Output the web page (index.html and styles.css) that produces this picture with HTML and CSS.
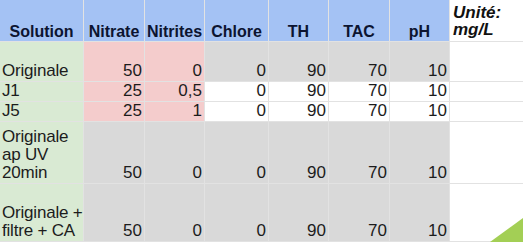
FILE: index.html
```html
<!DOCTYPE html>
<html lang="fr">
<head>
<meta charset="utf-8">
<title>Solutions</title>
<link rel="stylesheet" href="styles.css">
</head>
<body>
<div class="sheet">
  <div class="c hd">Solution</div>
  <div class="c hd">Nitrate</div>
  <div class="c hd">Nitrites</div>
  <div class="c hd">Chlore</div>
  <div class="c hd">TH</div>
  <div class="c hd">TAC</div>
  <div class="c hd">pH</div>
  <div class="c unit"><span>Unité:<br>mg/L</span></div>

  <div class="c g">Originale</div>
  <div class="c num p">50</div>
  <div class="c num p">0</div>
  <div class="c num gr">0</div>
  <div class="c num gr">90</div>
  <div class="c num gr">70</div>
  <div class="c num gr">10</div>
  <div class="c"></div>

  <div class="c g">J1</div>
  <div class="c num p">25</div>
  <div class="c num p">0,5</div>
  <div class="c num">0</div>
  <div class="c num">90</div>
  <div class="c num">70</div>
  <div class="c num">10</div>
  <div class="c"></div>

  <div class="c g">J5</div>
  <div class="c num p">25</div>
  <div class="c num p">1</div>
  <div class="c num">0</div>
  <div class="c num">90</div>
  <div class="c num">70</div>
  <div class="c num">10</div>
  <div class="c"></div>

  <div class="c g"><span>Originale<br>ap UV<br>20min</span></div>
  <div class="c num gr">50</div>
  <div class="c num gr">0</div>
  <div class="c num gr">0</div>
  <div class="c num gr">90</div>
  <div class="c num gr">70</div>
  <div class="c num gr">10</div>
  <div class="c"></div>

  <div class="c g"><span>Originale +<br>filtre + CA</span></div>
  <div class="c num gr">50</div>
  <div class="c num gr">0</div>
  <div class="c num gr">0</div>
  <div class="c num gr">90</div>
  <div class="c num gr">70</div>
  <div class="c num gr">10</div>
  <div class="c"></div>
</div>
<svg class="corner" width="33" height="24" viewBox="0 0 33 24" aria-hidden="true"><polygon points="0,24 33,24 33,0" fill="#a3cf55"/></svg>
</body>
</html>
```
FILE: styles.css
```css
html, body {
  margin: 0;
  padding: 0;
  overflow: hidden;
  background: #ffffff;
}

.sheet {
  display: grid;
  grid-template-columns: 83px 60px 59px 63px 59px 60px 59px 73px;
  grid-template-rows: 41px 39px 19px 19px 61px 57px;
  gap: 1px;
  padding-bottom: 1px;
  width: max-content;
  background: #e2e2e2;
  font-family: "Liberation Sans", Arial, sans-serif;
}

.c {
  display: flex;
  align-items: flex-end;
  justify-content: flex-start;
  padding: 0 2px 1px 3px;
  background: #ffffff;
  color: #1c1c1c;
  font-size: 17px;
  line-height: 18px;
  white-space: nowrap;
  overflow: hidden;
}

.num {
  justify-content: flex-end;
}

.hd {
  justify-content: center;
  padding: 0 1px 0 1px;
  background: #a4c2f4;
  color: #0c1430;
  font-size: 16px;
  font-weight: bold;
}

.unit {
  align-items: flex-start;
  padding-top: 4px;
  color: #111111;
  font-size: 17px;
  line-height: 17px;
  font-weight: bold;
  font-style: italic;
}

.g {
  padding-left: 2px;
  padding-right: 0;
  letter-spacing: -0.2px;
  background: #d9ead3;
}

.p {
  background: #f4cccc;
}

.gr {
  background: #d9d9d9;
}

.corner {
  position: absolute;
  right: 0;
  bottom: 0;
  display: block;
}
```
